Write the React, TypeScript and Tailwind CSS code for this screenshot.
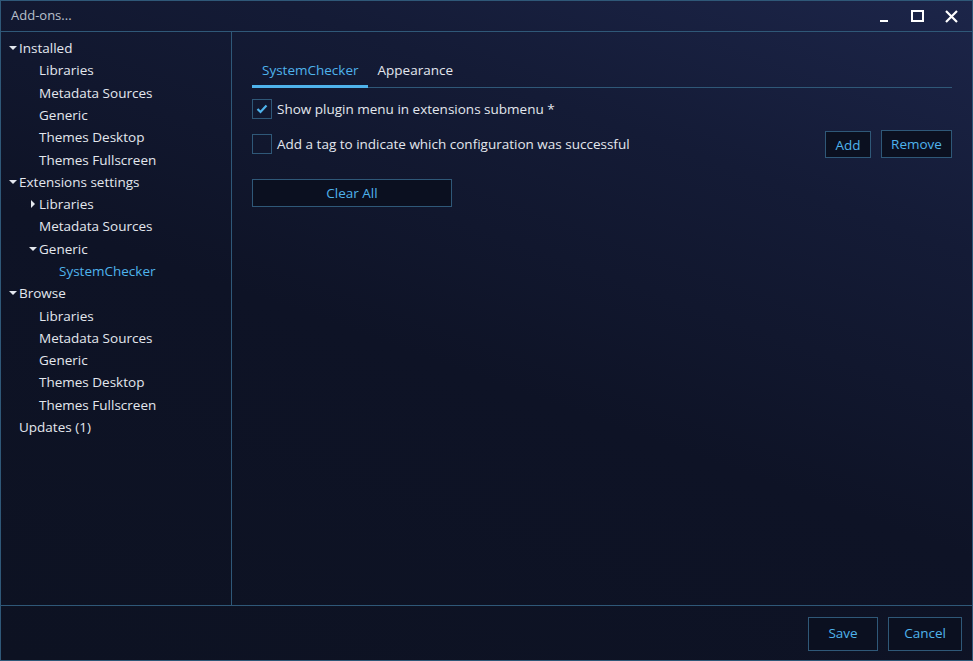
import React from "react";

type Node = {
  label: string;
  level: number;
  arrow?: "down" | "right";
  active?: boolean;
};

const tree: Node[] = [
  { label: "Installed", level: 0, arrow: "down" },
  { label: "Libraries", level: 1 },
  { label: "Metadata Sources", level: 1 },
  { label: "Generic", level: 1 },
  { label: "Themes Desktop", level: 1 },
  { label: "Themes Fullscreen", level: 1 },
  { label: "Extensions settings", level: 0, arrow: "down" },
  { label: "Libraries", level: 1, arrow: "right" },
  { label: "Metadata Sources", level: 1 },
  { label: "Generic", level: 1, arrow: "down" },
  { label: "SystemChecker", level: 2, active: true },
  { label: "Browse", level: 0, arrow: "down" },
  { label: "Libraries", level: 1 },
  { label: "Metadata Sources", level: 1 },
  { label: "Generic", level: 1 },
  { label: "Themes Desktop", level: 1 },
  { label: "Themes Fullscreen", level: 1 },
  { label: "Updates (1)", level: 0 },
];

const Arrow: React.FC<{ dir: "down" | "right" }> = ({ dir }) =>
  dir === "down" ? (
    <svg width="10" height="10" viewBox="0 0 10 10" className="shrink-0">
      <path d="M1 3 L9 3 L5 7 Z" fill="#e3e7ee" />
    </svg>
  ) : (
    <svg width="10" height="10" viewBox="0 0 10 10" className="shrink-0">
      <path d="M3 1 L7 5 L3 9 Z" fill="#e3e7ee" />
    </svg>
  );

const TreeRow: React.FC<Node> = ({ label, level, arrow, active }) => {
  const pad = level === 0 ? "pl-[7px]" : level === 1 ? "pl-[27px]" : "pl-[47px]";
  return (
    <div className={`flex items-center h-[22.3px] ${pad}`}>
      <div className="w-[12px] flex items-center">
        {arrow && <Arrow dir={arrow} />}
      </div>
      <span className={`-ml-[1px] ${active ? "text-[#4fb3ec]" : "text-[#e3e7ee]"}`}>{label}</span>
    </div>
  );
};

const Checkbox: React.FC<{ checked?: boolean }> = ({ checked }) => (
  <div className="w-[20px] h-[20px] border border-[#2f5878] flex items-center justify-center shrink-0">
    {checked && (
      <svg width="12" height="10" viewBox="0 0 12 10">
        <path d="M1.5 5 L4.5 8 L10.5 1.5" stroke="#4fb3ec" strokeWidth="2.2" fill="none" />
      </svg>
    )}
  </div>
);

const Btn: React.FC<{ label: string; className?: string }> = ({ label, className }) => (
  <button className={`border border-[#2f5878] bg-[#0b1020] text-[#4fb3ec] flex items-center justify-center ${className ?? ""}`}>
    {label}
  </button>
);

export default function App() {
  return (
    <div
      className="w-[973px] h-[661px] border border-[#2f5878] flex flex-col bg-[linear-gradient(200deg,#1c2549_0%,#141b36_25%,#0e1326_55%,#0d1222_100%)] text-[13.5px] overflow-hidden"
      style={{ fontFamily: "'Open Sans', 'Noto Sans', sans-serif" }}
    >
      {/* title bar */}
      <div className="h-[31px] border-b border-[#2f5878] flex items-center pl-[10px] shrink-0">
        <span className="text-[13px] text-[#b9c0cd]">Add-ons...</span>
        <div className="ml-auto flex items-center h-full">
          <div className="w-[34px] h-full flex items-center justify-center">
            <div className="w-[8px] h-[2px] bg-white mt-[9px] ml-[2px]" />
          </div>
          <div className="w-[34px] h-full flex items-center justify-center">
            <div className="w-[13px] h-[12px] border-2 border-white" />
          </div>
          <div className="w-[34px] h-full flex items-center justify-center mr-[4px]">
            <svg width="13" height="13" viewBox="0 0 13 13">
              <path d="M1 1 L12 12 M12 1 L1 12" stroke="white" strokeWidth="2.2" />
            </svg>
          </div>
        </div>
      </div>

      {/* body */}
      <div className="flex flex-1 min-h-0">
        <div className="w-[231px] border-r border-[#2f5878] shrink-0 pt-[5px]">
          {tree.map((n, i) => (
            <TreeRow key={i} {...n} />
          ))}
        </div>

        <div className="flex-1 pl-[20px] pr-[20px] pt-[23px]">
          <div className="flex border-b border-[#2f5878] h-[33px]">
            <div className="pl-[10px] pr-[9px] flex items-center text-[#4fb3ec] border-b-[3px] border-[#4fb3ec] -mb-[1px] pt-[1px]">
              SystemChecker
            </div>
            <div className="px-[10px] flex items-center text-[#e3e7ee] pb-[2px]">Appearance</div>
          </div>

          <div className="flex items-center gap-[5px] mt-[11px]">
            <Checkbox checked />
            <span className="text-[#e3e7ee]">Show plugin menu in extensions submenu *</span>
          </div>

          <div className="flex items-center gap-[5px] mt-[11px] h-[28px]">
            <Checkbox />
            <span className="text-[#e3e7ee]">Add a tag to indicate which configuration was successful</span>
            <div className="ml-auto flex items-center gap-[10px]">
              <Btn label="Add" className="w-[46px] h-[27px] mt-[1px]" />
              <Btn label="Remove" className="w-[71px] h-[28px]" />
            </div>
          </div>

          <Btn label="Clear All" className="w-[200px] h-[28px] mt-[21px]" />
        </div>
      </div>

      {/* footer */}
      <div className="h-[55px] border-t border-[#2f5878] shrink-0 flex items-center justify-end gap-[10px] pr-[10px]">
        <Btn label="Save" className="w-[70px] h-[34px] mt-[1px]" />
        <Btn label="Cancel" className="w-[74px] h-[34px] mt-[1px]" />
      </div>
    </div>
  );
}
